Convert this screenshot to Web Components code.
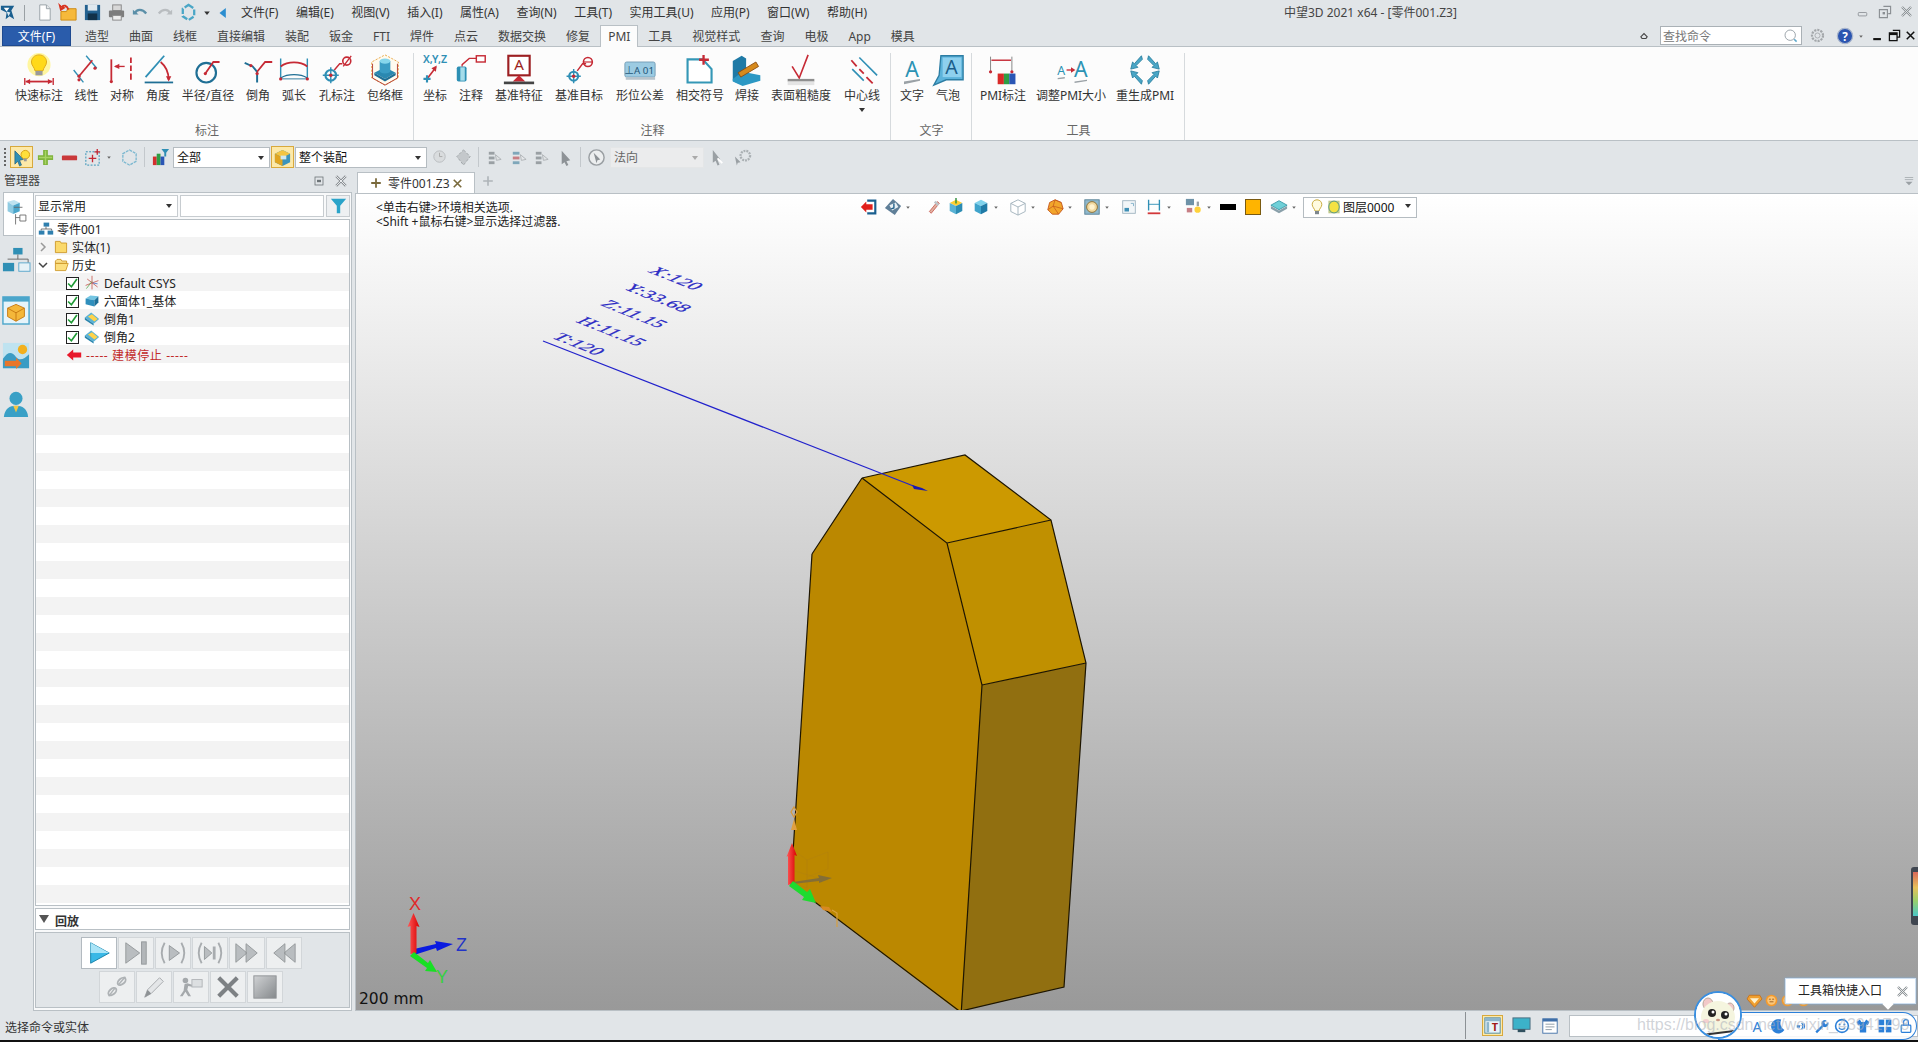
<!DOCTYPE html>
<html lang="zh">
<head>
<meta charset="utf-8">
<title>中望3D 2021 x64</title>
<style>
  html,body{margin:0;height:100%;overflow:hidden;}
  body{font:12px "Noto Sans","Noto Sans CJK SC",sans-serif;color:#333;background:#e1e5e8;position:relative;}
  #app{display:flex;flex-direction:column;height:1042px;}
  #work{display:flex;height:839px;}
  #foot{height:2px;background:#111;}
</style>
</head>
<body>
<div id="app">
  <zw-titlebar></zw-titlebar>
  <zw-tabs active="PMI"></zw-tabs>
  <zw-ribbon>
    <zw-group label="标注" width="414" pad="13">
      <zw-tool label="快速标注" w="52" icon="quick"></zw-tool>
      <zw-tool label="线性" w="43" icon="linear"></zw-tool>
      <zw-tool label="对称" w="28" icon="sym"></zw-tool>
      <zw-tool label="角度" w="44" icon="angle"></zw-tool>
      <zw-tool label="半径/直径" w="56" icon="radius"></zw-tool>
      <zw-tool label="倒角" w="44" icon="chamfer"></zw-tool>
      <zw-tool label="弧长" w="28" icon="arc"></zw-tool>
      <zw-tool label="孔标注" w="58" icon="hole"></zw-tool>
      <zw-tool label="包络框" w="38" icon="bbox"></zw-tool>
    </zw-group>
    <zw-group label="注释" width="477" pad="6">
      <zw-tool label="坐标" w="30" icon="coord"></zw-tool>
      <zw-tool label="注释" w="42" icon="note"></zw-tool>
      <zw-tool label="基准特征" w="54" icon="datumf"></zw-tool>
      <zw-tool label="基准目标" w="66" icon="datumt"></zw-tool>
      <zw-tool label="形位公差" w="56" icon="tol"></zw-tool>
      <zw-tool label="相交符号" w="64" icon="inter"></zw-tool>
      <zw-tool label="焊接" w="30" icon="weld"></zw-tool>
      <zw-tool label="表面粗糙度" w="78" icon="rough"></zw-tool>
      <zw-tool label="中心线" w="44" icon="center" more></zw-tool>
    </zw-group>
    <zw-group label="文字" width="81" pad="5">
      <zw-tool label="文字" w="32" icon="text"></zw-tool>
      <zw-tool label="气泡" w="40" icon="bubble"></zw-tool>
    </zw-group>
    <zw-group label="工具" width="213" pad="6">
      <zw-tool label="PMI标注" w="50" icon="pmi"></zw-tool>
      <zw-tool label="调整PMI大小" w="86" icon="resize"></zw-tool>
      <zw-tool label="重生成PMI" w="62" icon="regen"></zw-tool>
    </zw-group>
  </zw-ribbon>
  <zw-selectbar></zw-selectbar>
  <div id="work">
    <zw-manager>
      <zw-tree-row level="0" icon="asm" text="零件001"></zw-tree-row>
      <zw-tree-row level="1" chev="right" icon="folder" text="实体(1)"></zw-tree-row>
      <zw-tree-row level="1" chev="down" icon="folderopen" text="历史"></zw-tree-row>
      <zw-tree-row level="2" check icon="csys" text="Default CSYS"></zw-tree-row>
      <zw-tree-row level="2" check icon="block" text="六面体1_基体"></zw-tree-row>
      <zw-tree-row level="2" check icon="cham" text="倒角1"></zw-tree-row>
      <zw-tree-row level="2" check icon="cham" text="倒角2"></zw-tree-row>
      <zw-tree-row level="2" icon="stop" stop text="----- 建模停止 -----"></zw-tree-row>
    </zw-manager>
    <zw-viewport></zw-viewport>
  </div>
  <zw-statusbar></zw-statusbar>
  <div id="foot"></div>
</div>
<zw-toolbox></zw-toolbox>

<script>
const R = '#c62a35', B = '#2f8fb5', D = '#1f6f95';
const ln = (d, c, w) => `<path d="${d}" fill="none" stroke="${c}" stroke-width="${w || 1.5}"/>`;
const dot = (x, y, c, r) => `<circle cx="${x}" cy="${y}" r="${r || 1.8}" fill="${c || R}"/>`;
const target = (x, y, r) => `<circle cx="${x}" cy="${y}" r="${r}" fill="none" stroke="${B}" stroke-width="2.4"/><path d="M${x - r - 3} ${y}h${2 * r + 6}M${x} ${y - r - 3}v${2 * r + 6}" stroke="${B}" stroke-width="1.6"/>${dot(x, y, R, 2)}`;

// 36x36 ribbon icons
const RIBBON = {
  quick: `<circle cx="18" cy="12" r="13" fill="#fff6a0"/><path d="M18 1c-6 0-8.500 4.500-8.500 8 0 4 3.500 6 4 10h9c.5-4 4-6 4-10 0-3.500-2.500-8-8.500-8z" fill="#ffd91a" stroke="#dca512"/><rect x="14" y="19" width="8" height="5" fill="#9a9a9a"/>${ln('M3 31h30', R, 2)}${ln('M2 27v8M34 27v8', R, 1.5)}<path d="M3 31l5-3v6zM33 31l-5-3v6z" fill="${R}"/>`,
  linear: `${ln('M3 18l11 14', B)}${ln('M17 2l12 14', B)}${ln('M9 25L24 7', R, 2)}${dot(9, 29)}${dot(27, 16)}${dot(9, 25)}`,
  sym: `${ln('M6 6v24', R, 2)}${dot(6, 31)}${ln('M10 14h11', R, 1.5)}<path d="M9 14l6-3v6z" fill="${R}"/><path d="M28 4v6M28 13v6M28 22v7" stroke="${R}" stroke-width="2"/>`,
  angle: `${ln('M3 32h32', D, 2)}${ln('M4 26L25 2', B, 2)}${ln('M21 9c6 5 9 12 9 20', R, 2)}<path d="M30 31l-3-6h6z" fill="${R}"/>`,
  radius: `<circle cx="16" cy="21" r="11" fill="none" stroke="${D}" stroke-width="2.400"/>${ln('M15 22L24 9h7', R, 2)}${dot(15, 22)}`,
  chamfer: `${ln('M3 10l9 4 5 6v12', D, 2.200)}${ln('M17 20L26 9h8', R, 2)}${dot(10, 13)}${dot(17, 22)}`,
  arc: `${ln('M3 5v24M33 5v24', B, 1.600)}${ln('M3 28h30', D, 1)}${ln('M3 14c8-6 22-6 30 0', R, 2)}${ln('M3 27c8-5 22-5 30 0', D, 1.500)}${dot(3, 28)}${dot(33, 28)}`,
  hole: `${target(11, 24, 6)}${ln('M15 18l6-7h3', R, 1.600)}<circle cx="29" cy="8" r="4.500" fill="none" stroke="${R}" stroke-width="1.800"/>${ln('M25 14L34 2', R, 1.500)}`,
  bbox: `<path d="M18 1l15 8v18l-15 8-15-8V9z" fill="#fffbef" stroke="#e8a23c" stroke-dasharray="2.500 1.500"/><path d="M4 11v16l14 8 14-8V11" fill="none" stroke="#b5433a" stroke-width="1.100"/><path d="M6 21l12-6 12 6-12 7z" fill="#2a88b0"/><path d="M6 21v3l12 7 12-7v-3l-12 7z" fill="#1f6f95"/><path d="M12 8v11a6 3 0 0 0 12 0V8z" fill="#3a9cc4"/><ellipse cx="18" cy="8" rx="6" ry="3" fill="#86d6ec"/>`,
  coord: `<text x="18" y="10" font-size="12" text-anchor="middle" fill="${B}" font-weight="600">X,Y,Z</text>${ln('M9 28L19 15', R, 1.800)}<path d="M20 13l-1 7-5-4z" fill="${R}"/><path d="M5 28h8M9 24v8" stroke="${B}" stroke-width="2.400"/>`,
  note: `<rect x="2" y="14" width="11" height="17" rx="2" fill="#2c8fb4"/><rect x="6" y="15" width="5" height="15" fill="#a4dcea"/>${ln('M8 14v-2l8-7h8', R, 1.500)}<rect x="24" y="2" width="10" height="7" fill="#fff" stroke="${R}" stroke-width="1.600"/>`,
  datumf: `<rect x="6" y="2" width="24" height="22" fill="#fff" stroke="#9c1f22" stroke-width="2.400"/><text x="18" y="18" font-size="17" text-anchor="middle" fill="#9c1f22">A</text><path d="M18 24l7 7H11z" fill="#c62a35"/><rect x="1" y="31" width="34" height="3" fill="#444"/>`,
  datumt: `${target(12, 25, 5)}${ln('M16 19l6-8h4', R, 1.600)}<circle cx="28" cy="9" r="5" fill="none" stroke="${R}" stroke-width="1.800"/>${ln('M23 9h10', R, 1.300)}`,
  tol: `<rect x="1" y="9" width="34" height="17" rx="2" fill="#9ccbe2" stroke="#6f9ab3"/><text x="17" y="22" font-size="11" text-anchor="middle" fill="#23577a">⊥A 01</text><rect x="2" y="26" width="33" height="3" fill="#b8c4cc"/>`,
  inter: `<path d="M4 6h17l10 11v15H4z" fill="#fff" stroke="#3497b6" stroke-width="2.400"/>${ln('M22 1v11M17 6.500h11', R, 2.600)}`,
  weld: `<path d="M12 2l5 3v20l-10 8-5-3V8z" fill="#1f7aa6"/><path d="M2 28l11-8 20 4v6l-20 6-11-5z" fill="#2c98c4"/><path d="M8 21l20-12 3 5-20 12z" fill="#d68a1d" stroke="#8c4c10"/>`,
  rough: `${ln('M8 14l8 13L26 1', R, 1.800)}<rect x="3" y="28" width="30" height="3" fill="#8e8e8e"/><rect x="3" y="31" width="30" height="4" fill="#e4e4e4"/>`,
  center: `<path d="M6 7l6 7M15 17l5 5M23 26l7 7" stroke="${R}" stroke-width="2"/>${ln('M7 17l13 13', B, 1.800)}${ln('M15 4l20 20', B, 1.800)}`,
  text: `<text x="18" y="26" font-size="24" text-anchor="middle" fill="#2b93b4">A</text><path d="M9 31l18-3v2L9 34z" fill="#9aa1a6"/>`,
  bubble: `<path d="M10 2h25v27H16L2 35l6-11z" fill="#5cb3db" stroke="#2c7da3" stroke-width="1.500"/><rect x="12" y="4" width="21" height="22" fill="#8ed0ee"/><text x="22" y="23" font-size="22" text-anchor="middle" fill="#1d5e8a">A</text>`,
  pmi: `${ln('M4 3v18M28 3v18', '#7a7a7a', 1)}${ln('M5 7h22', R, 1.600)}${dot(4, 20)}${dot(28, 20)}<rect x="12" y="22" width="7" height="12" fill="#d92a28"/><rect x="19" y="22" width="6" height="12" fill="#2f9e44"/><rect x="25" y="22" width="7" height="12" fill="#2a56b5"/>`,
  resize: `<text x="7" y="24" font-size="14" text-anchor="middle" fill="#2b93b4">A</text>${ln('M13 18h7', R, 1.500)}<path d="M23 18l-5-3v6z" fill="${R}"/><text x="29" y="26" font-size="24" text-anchor="middle" fill="#2b93b4">A</text><path d="M3 27l8-1v1.500l-8 1zM22 31l14-2v1.500l-14 2z" fill="#9aa1a6"/>`,
  regen: `<g fill="#4aa6c6" stroke="#2a7f9f"><path d="M14 2l1 4-7 7 2 2-8 2 2-8 2 2z"/><path d="M22 2l-1 4 7 7-2 2 8 2-2-8-2 2z"/><path d="M14 34l1-4-7-7 2-2-8-2 2 8 2-2z"/><path d="M22 34l-1-4 7-7-2-2 8-2-2 8-2-2z"/></g>`
};

// 20x20 small icons
const cube = (t, l, r) => `<path d="M10 2l7 3.500-7 3.500-7-3.500z" fill="${t}"/><path d="M3 5.500l7 3.500v9l-7-3.500z" fill="${l}"/><path d="M17 5.500l-7 3.500v9l7-3.500z" fill="${r}"/>`;
const SMALL = {
  logo: `<path d="M2 3h14l-3 5 3 9-5-3-4 3 1-7-6-3z" fill="#1a5f8f"/><path d="M5 5h6l-3 4z" fill="#fff"/><path d="M8 9l4 1-2 4z" fill="#d9e8f0"/>`,
  newdoc: `<path d="M5 2h7l4 4v12H5z" fill="#fff" stroke="#9aa2a8"/><path d="M12 2v4h4" fill="#e4e8ea" stroke="#9aa2a8"/>`,
  open: `<path d="M2 9h6l1-3h9v12H2z" fill="#f6b93b" stroke="#cf8a12"/><path d="M10 7C8 2 5 2 3 4l2 1-3 2-1-4 1 1" fill="none" stroke="#d8331f" stroke-width="2"/>`,
  save: `<rect x="2" y="2" width="16" height="16" fill="#23618f"/><rect x="5" y="2" width="10" height="6" fill="#dfe8ee"/><rect x="5" y="11" width="10" height="7" fill="#11324a"/>`,
  print: `<rect x="6" y="2" width="9" height="6" fill="#d8d8d8" stroke="#888"/><rect x="2" y="8" width="16" height="7" rx="1" fill="#7d7d7d"/><rect x="6" y="13" width="9" height="5" fill="#eee" stroke="#888"/>`,
  undo: `<path d="M4 11c2-5 8-5 12 0" fill="none" stroke="#5b8fa8" stroke-width="2.400"/><path d="M2 7l6 5H2z" fill="#5b8fa8"/>`,
  redo: `<path d="M16 11c-2-5-8-5-12 0" fill="none" stroke="#b9bdc0" stroke-width="2.400"/><path d="M18 7l-6 5h6z" fill="#b9bdc0"/>`,
  refresh: `<path d="M10 2l6 4v8l-6 4-6-4V6z" fill="none" stroke="#4aa6c6" stroke-width="2.400" stroke-dasharray="6 2"/>`,
  ddown: `<path d="M6 8h8l-4 5z" fill="#333"/>`,
  ddgray: `<path d="M7 9h6l-3 4z" fill="#666"/>`,
  back: `<path d="M14 3v14L5 10z" fill="#2b8ed0"/>`,
  minwin: `<rect x="5" y="10" width="10" height="4" rx="1" fill="none" stroke="#8a8f93"/>`,
  maxwin: `<path d="M8 3h9v9h-3M3 7h10v10H3z" fill="none" stroke="#8a8f93" stroke-width="1.400"/><rect x="7" y="10" width="3" height="3" fill="#8a8f93"/>`,
  closewin: `<path d="M4 4l12 12M16 4L4 16" stroke="#8a8f93" stroke-width="3"/><path d="M4 4l12 12M16 4L4 16" stroke="#e1e5e8" stroke-width="1.200"/>`,
  up: `<path d="M6 11l4-4 4 4-1.500 2h-5z" fill="none" stroke="#444" stroke-width="1.300"/>`,
  search: `<circle cx="9" cy="9" r="6.500" fill="none" stroke="#9aa2a8" stroke-width="1.200"/><path d="M14 14l3 3" stroke="#5aa7cc" stroke-width="2"/>`,
  gear: `<circle cx="10" cy="10" r="6.500" fill="none" stroke="#a3a7aa" stroke-width="2.600" stroke-dasharray="2.500 1.200"/><circle cx="10" cy="10" r="3" fill="none" stroke="#a3a7aa"/>`,
  help: `<circle cx="10" cy="10" r="8.500" fill="#2b55b0" stroke="#a9b6cc" stroke-width="1.400"/><text x="10" y="15" font-size="13" font-weight="700" text-anchor="middle" fill="#fff">?</text>`,
  min2: `<rect x="5" y="13" width="9" height="2.500" fill="#111"/>`,
  max2: `<path d="M8 4h8v8h-3M4 7h9v9H4z" fill="none" stroke="#111" stroke-width="1.500"/><rect x="4" y="7" width="9" height="2.500" fill="#111"/>`,
  close2: `<path d="M5 5l10 10M15 5L5 15" stroke="#111" stroke-width="2"/>`,
  pick: `<path d="M3 3l9 9-4 1 2 5-2 1-2-5-3 3z" fill="#2f8fb5" stroke="#16506e" stroke-width=".6"/><circle cx="14" cy="7" r="4.500" fill="#ffdf3b" stroke="#d8a010"/><rect x="12.500" y="11" width="3" height="3" fill="#999"/>`,
  plus: `<path d="M10 2v16M2 10h16" stroke="#7fb33c" stroke-width="5"/><path d="M10 3v14M3 10h14" stroke="#a8d464" stroke-width="1.500"/>`,
  minus: `<rect x="2" y="8" width="16" height="5" rx="1" fill="#c9383a"/>`,
  addbox: `<rect x="3" y="4" width="14" height="14" fill="none" stroke="#2f8fb5" stroke-dasharray="2 1.500"/><path d="M10 7v8M6 11h8" stroke="${R}" stroke-width="1.400"/><path d="M15 1v6M12 4h6" stroke="${R}" stroke-width="1.400"/>`,
  hexa: `<path d="M10 2l7 4v8l-7 4-7-4V6z" fill="none" stroke="#7cb8d0" stroke-width="1.400" stroke-dasharray="3 1"/>`,
  filterc: `<rect x="2" y="9" width="4" height="9" fill="#d32f2f"/><rect x="6" y="6" width="4" height="12" fill="#2e9e44"/><rect x="10" y="9" width="4" height="9" fill="#2a56b5"/><path d="M11 1h8l-3 4v4h-2V5z" fill="#2f8fb5"/>`,
  asmb: `<path d="M10 2l8 4v9l-8 4-8-4V6z" fill="#3b94bc"/><path d="M10 2l8 4-8 4-8-4z" fill="#f4c542"/><path d="M2 6l8 4v9l-8-4z" fill="#e0a520"/><rect x="8" y="8" width="6" height="4" fill="#cfe8f2"/>`,
  dim1: `<circle cx="10" cy="9" r="6" fill="#d9dcde" stroke="#b9bdc0"/><path d="M10 5v4h3" stroke="#aaa" fill="none"/>`,
  dim2: `<path d="M10 2l7 7-7 9-7-9z" fill="#c4c8cb" stroke="#9fa4a8" stroke-dasharray="3 1.500"/>`,
  dim3: `<rect x="4" y="4" width="6" height="3" fill="#9aa0a4"/><rect x="4" y="9" width="6" height="3" fill="#9aa0a4"/><rect x="4" y="14" width="6" height="3" fill="#9aa0a4"/><path d="M11 7l6 5-5 1z" fill="#dfe2e4" stroke="#b0b4b7"/>`,
  dim4: `<rect x="4" y="4" width="7" height="3" fill="#7fa7ba"/><rect x="4" y="9" width="7" height="3" fill="#c77f85"/><rect x="4" y="14" width="7" height="3" fill="#7fa7ba"/><path d="M12 7l6 5-5 1z" fill="#e6e8ea" stroke="#b0b4b7"/>`,
  dim5: `<path d="M6 3l9 10-4 1 2 4-2 1-2-4-3 2z" fill="#8d9296"/>`,
  dim6: `<circle cx="10" cy="10" r="8" fill="#eceeef" stroke="#9a9fa3" stroke-width="1.500"/><path d="M7 5l7 7-3 1-1 3z" fill="#8d9296"/>`,
  dim7: `<path d="M4 2l8 10-3 .5 2 5-2 1-2-5-3 2z" fill="#9aa0a4"/><path d="M9 11l5 5" stroke="#fff" stroke-width="2"/>`,
  dim8: `<path d="M2 9l6 6-3 .5-1 3z" fill="#9aa0a4"/><circle cx="13" cy="8" r="5" fill="none" stroke="#aab0b3" stroke-width="2.400" stroke-dasharray="2 1"/>`,
  mgrpin: `<rect x="5" y="5" width="10" height="10" fill="none" stroke="#6d7478"/><rect x="7.500" y="8.500" width="5" height="3" fill="#6d7478"/>`,
  mgrx: `<path d="M4 4l12 12M16 4L4 16" stroke="#8a8f93" stroke-width="3"/><path d="M4 4l12 12M16 4L4 16" stroke="#eef0f2" stroke-width="1.200"/>`,
  funnel: `<path d="M1 1h18l-7 8v9H8V9z" fill="#2aa3c9"/>`,
  tabplus: `<path d="M10 4v12M4 10h12" stroke="#7a6a3c" stroke-width="2.200"/>`,
  tabplus2: `<path d="M10 4v12M4 10h12" stroke="#aeb4b8" stroke-width="2"/>`,
  tabx: `<path d="M5 5l10 10M15 5L5 15" stroke="#7a6a3c" stroke-width="2.200"/>`,
  morev: `<path d="M4 5h12M4 8h12" stroke="#9aa0a4"/><path d="M5 11h10l-5 5z" fill="#9aa0a4"/>`,
  // view toolbar
  exit: `<path d="M8 3h9v14H8" fill="none" stroke="#1a5f8f" stroke-width="2.400"/><path d="M1 10l6-6v3h7v6H7v3z" fill="#e1201c"/>`,
  v1: `<path d="M10 1l9 8-7 10L1 11z" fill="#5f7f98"/><path d="M6 8l7-3 3 5-7 4z" fill="#e8f0f4"/><path d="M11 6v5l-3 1" fill="none" stroke="#1f5f8a" stroke-width="1.500"/>`,
  v2: `<path d="M6 15L15 4l2 2-9 11z" fill="#e0b0a0" stroke="#c2453c" stroke-width=".8"/><path d="M13 3l4 4-2 2-4-4z" fill="#bdc4c8"/>`,
  v3: cube('#ffcf33', '#59b2d4', '#2c8cb3') + `<path d="M10 0v6" stroke="#2f8f3d" stroke-width="1.600"/>`,
  v4: cube('#7fd2ec', '#3fa3cb', '#1f7aa6'),
  v5: `<path d="M10 2l8 4v9l-8 4-8-4V6z" fill="#fff" stroke="#9fb0ba"/><path d="M2 6l8 4 8-4M10 10v9" fill="none" stroke="#9fb0ba"/>`,
  v6: `<path d="M10 2l7 3 2 7-5 6H7l-5-5 2-8z" fill="#f2a52b" stroke="#c4561c"/><path d="M10 2l-2 7 6 9M8 9l-6 4M8 9l11 3M10 2l7 3" fill="none" stroke="#c4561c" stroke-width=".8"/>`,
  v7: `<rect x="2" y="2" width="16" height="16" fill="#8fb8cc" stroke="#557f95"/><circle cx="10" cy="10" r="6" fill="#f0d9a0" stroke="#8a6a2a"/><circle cx="10" cy="10" r="3" fill="#fff3cf"/>`,
  v8: `<rect x="3" y="3" width="14" height="14" fill="#f2f6f8" stroke="#9fb4c0"/><rect x="5" y="11" width="5" height="4" fill="#3f8fb5"/><path d="M12 6h3v3" fill="none" stroke="#7fb0c8"/>`,
  v9: `<path d="M4 2v12M16 2v12" stroke="#2f8fb5" stroke-width="1.500"/><path d="M4 7h12" stroke="#2f8fb5"/><path d="M3 17h14" stroke="#d2383a" stroke-width="2"/>`,
  v10: `<rect x="1" y="1" width="9" height="7" fill="#6f93a8"/><rect x="2" y="11" width="6" height="5" fill="#c77f85"/><circle cx="14" cy="13" r="3.500" fill="#ffd23b"/><rect x="13" y="4" width="2.500" height="5" fill="#9aa0a4"/>`,
  v11: `<path d="M10 3l9 5-9 5-9-5z" fill="#6fd0d8" stroke="#3a9aa8"/><path d="M1 9l9 5 9-5v3l-9 5-9-5z" fill="#8aa0aa"/>`,
  bulb: `<path d="M10 1c-4 0-6 3-6 6 0 3 3 5 3.500 8h5c.5-3 3.500-5 3.500-8 0-3-2-6-6-6z" fill="#fffbe0" stroke="#c8a93a" stroke-width="1.200"/><rect x="7.500" y="15" width="5" height="4" fill="#7d868c"/>`,
  lamp: `<rect x="2" y="1" width="16" height="18" fill="#bfc88a"/><ellipse cx="10" cy="10" rx="7.500" ry="8.500" fill="#f4e243" stroke="#3f8a8a" stroke-width="1.200"/>`,
  // manager rail
  rail1: `<path d="M6 3l7-2 6 3-7 3z" fill="#bfe3f0"/><path d="M6 3l6 4v9l-6-3z" fill="#8fcbe2"/><path d="M19 4l-7 3v9l7-3z" fill="#4ba6cb"/><path d="M16 14h10M18 22v12M18 26h5M23 23h7v7h-7z" transform="translate(-2 -4) scale(.92)" fill="none" stroke="#666"/>`,
  rail2: `<rect x="12" y="1" width="10" height="7" fill="#2f8fb5"/><path d="M17 8v5M6 13h22v4" fill="none" stroke="#666"/><rect x="1" y="17" width="12" height="9" fill="#2f8fb5"/><rect x="18" y="17" width="12" height="9" fill="#e6f2f7" stroke="#5aa7cc"/>`,
  rail3: `<rect x="1" y="1" width="28" height="29" fill="#e6f4fa" stroke="#4ba6cb" stroke-width="1.500"/><rect x="1" y="1" width="28" height="5" fill="#4ba6cb"/><path d="M15 9l9 4v9l-9 5-9-5v-9z" fill="#f4b73a" stroke="#c77a12"/><path d="M6 13l9 5 9-5M15 18v9" fill="none" stroke="#c77a12"/>`,
  rail4: `<rect x="1" y="1" width="28" height="27" fill="#bfe3f0"/><circle cx="22" cy="8" r="5" fill="#f2b01e"/><path d="M1 18c6-9 10-7 14-2s9 2 14-3v15H1z" fill="#3a9cc4"/><path d="M3 20h12v-3l6 6-6 6v-3H3z" fill="#e8762a"/>`,
  rail5: `<circle cx="15" cy="9" r="7" fill="#39a0c6"/><path d="M2 29c1-9 6-12 13-12s12 3 13 12z" fill="#39a0c6"/><path d="M12 17l3 7 3-7z" fill="#f4c542"/>`,
  // tree
  asm: `<rect x="7" y="2" width="7" height="5" fill="#2f7fae"/><path d="M10 7v3M4 10h13v2" fill="none" stroke="#555"/><path d="M4 10v2" stroke="#555"/><rect x="1" y="12" width="7" height="5" fill="#2f7fae"/><rect x="12" y="12" width="7" height="5" fill="#2f7fae"/>`,
  folder: `<path d="M3 3h6l1 2h7v12H3z" fill="#fbd96b" stroke="#c88f1a"/>`,
  folderopen: `<path d="M3 5l2-2h5l1 2h6v3H3z" fill="#fbe08a" stroke="#c88f1a"/><path d="M3 8h16l-3 9H3z" fill="#fcdf7e" stroke="#c88f1a"/>`,
  csys: `<path d="M10 1v17M2 13l16-6M4 5l13 10" fill="none" stroke="#c4534a"/><path d="M10 8l-7 9" stroke="#56a64e"/><path d="M11 10l6 1" stroke="#4a6fc4"/>`,
  block: `<path d="M2 7l6-4 10 1-5 5z" fill="#74c5e2"/><path d="M2 7l11 2v8L2 14z" fill="#2f8fbd"/><path d="M13 9l5-5v8l-5 5z" fill="#1d6f98"/>`,
  cham: `<path d="M1 8l8-6 10 8-7 6z" fill="#5bb3d6"/><path d="M5 7l5-3 7 6-4 3z" fill="#ffd34a"/><path d="M1 8l11 8v2L1 11z" fill="#2a85ad"/>`,
  stop: `<path d="M1 10l8-7v4h10v6H9v4z" fill="#e8182b"/>`,
  // status bar
  st1: `<rect x="1" y="1" width="18" height="18" fill="#e8f3f8" stroke="#3e7d9c"/><rect x="1" y="1" width="18" height="4" fill="#8db6cc"/><rect x="3" y="6" width="3" height="12" fill="#8db6cc"/><text x="13" y="17" font-size="13" font-weight="700" text-anchor="middle" fill="#a01a1a">T</text>`,
  st2: `<rect x="1" y="2" width="18" height="12" fill="#3cb2c9" stroke="#4c6d80"/><rect x="6" y="14" width="8" height="3" fill="#30505f"/>`,
  st3: `<rect x="2" y="2" width="16" height="16" fill="#fff" stroke="#3f6fa8"/><rect x="2" y="2" width="16" height="3" fill="#3f6fa8"/><path d="M5 8h10M5 11h10M5 14h7" stroke="#8a97a3"/>`,
  // playback
  play: `<path d="M5 3l20 11-20 11z" fill="#3ab8e6" stroke="#157fa8"/><path d="M5 3l20 11H5z" fill="#a9e4f7"/>`,
  pl1: `<path d="M3 3l15 11-15 11z" fill="#b9bdc0" stroke="#94989b"/><rect x="20" y="2" width="5" height="24" fill="#b2b6b9" stroke="#94989b"/>`,
  pl2: `<path d="M10 6l11 8-11 8z" fill="#b9bdc0" stroke="#94989b"/><path d="M5 3c-4 7-4 15 0 22M23 3c4 7 4 15 0 22" fill="none" stroke="#a8acaf" stroke-width="2"/>`,
  pl3: `<path d="M8 7l8 7-8 7z" fill="#b9bdc0" stroke="#94989b"/><rect x="17" y="7" width="3" height="14" fill="#a8acaf"/><path d="M5 3c-4 7-4 15 0 22M23 3c4 7 4 15 0 22" fill="none" stroke="#a8acaf" stroke-width="2"/>`,
  pl4: `<path d="M2 4l12 10-12 10zM13 4l12 10-12 10z" fill="#b9bdc0" stroke="#94989b"/>`,
  pl5: `<path d="M26 4L14 14l12 10zM15 4L3 14l12 10z" fill="#b9bdc0" stroke="#94989b"/>`,
  pl6: `<path d="M5 24l7-9M16 11l7-8" stroke="#aeb2b5" stroke-width="1.500"/><ellipse cx="19" cy="8" rx="5" ry="3" fill="none" stroke="#aeb2b5" stroke-width="2" transform="rotate(-40 19 8)"/><ellipse cx="9" cy="19" rx="5" ry="3" fill="none" stroke="#aeb2b5" stroke-width="2" transform="rotate(-40 9 19)"/>`,
  pl7: `<path d="M4 25l3-8L20 4l4 4-13 13z" fill="#e4e6e8" stroke="#a4a8ab"/><path d="M4 25l3-8 4 4z" fill="#8e9295"/>`,
  pl8: `<circle cx="8" cy="7" r="3" fill="#a4a8ab"/><path d="M7 11l-1 7-4 6h3l3-5 3 5h3l-4-7 1-4 6 1v-2l-7-2z" fill="#a4a8ab"/><rect x="15" y="6" width="11" height="8" fill="#dcdfe1" stroke="#b0b4b7"/>`,
  pl9: `<path d="M4 4l20 20M24 4L4 24" stroke="#7d8184" stroke-width="4.500"/>`,
  pl10: `<rect x="2" y="2" width="24" height="24" fill="url(#zwg)" stroke="#8e9295"/><defs><linearGradient id="zwg" x1="0" y1="0" x2="1" y2="1"><stop offset="0" stop-color="#d0d2d4"/><stop offset="1" stop-color="#85898c"/></linearGradient></defs>`,
  // toolbox
  tA: `<text x="10" y="17" font-size="18" text-anchor="middle" fill="#2b7fd8">A</text>`,
  tmoon: `<path d="M14 2a9 9 0 1 0 4 13A10 10 0 0 1 14 2z" fill="#2b7fd8"/>`,
  tdots: `<path d="M6 9h4v3H6z" fill="#2b7fd8"/><path d="M12 6c2 2 2 6 0 8M15 7c1 2 1 4 0 6" fill="none" stroke="#2b7fd8" stroke-width="1.400"/>`,
  twrench: `<path d="M3 17l8-8a4.500 4.500 0 0 1 6-6l-3 3 2 2 3-3a4.500 4.500 0 0 1-6 6l-8 8z" fill="#2b7fd8"/>`,
  tsmile: `<circle cx="10" cy="10" r="8" fill="none" stroke="#2b7fd8" stroke-width="2"/><circle cx="7" cy="8" r="1.200" fill="#2b7fd8"/><circle cx="13" cy="8" r="1.200" fill="#2b7fd8"/><path d="M6 12c2 3 6 3 8 0" fill="none" stroke="#2b7fd8" stroke-width="1.500"/>`,
  tshirt: `<path d="M6 2l-4 3 2 4 2-1v10h8V8l2 1 2-4-4-3-2 3h-4z" fill="#2b7fd8"/>`,
  tgrid: `<rect x="2" y="2" width="7" height="7" fill="#2b7fd8"/><rect x="11" y="2" width="7" height="7" fill="#2b7fd8"/><rect x="2" y="11" width="7" height="7" fill="#2b7fd8"/><rect x="11" y="11" width="7" height="7" fill="#2b7fd8"/>`,
  tlock: `<rect x="4" y="9" width="12" height="9" rx="1" fill="none" stroke="#2b7fd8" stroke-width="1.500"/><path d="M7 9V5a3 3 0 0 1 6 0v4" fill="none" stroke="#2b7fd8" stroke-width="1.500"/>`,
  gem: `<path d="M3 3h14l3 5-10 11L0 8z" fill="#f0a030" stroke="#c46a10"/><path d="M4 7h12l-6 7z" fill="#fff3d0"/>`,
  face: `<circle cx="10" cy="10" r="9" fill="#f59a2c"/><circle cx="10" cy="10" r="6.500" fill="#fbc77a"/><path d="M6 8h3M11 8h3M7 12h6" stroke="#8a4a10" stroke-width="1.200"/>`
};

function svg(name, w, h) {
  const big = RIBBON[name];
  const box = /^rail/.test(name) ? 30 : /^(play|pl\d)/.test(name) ? 28 : big ? 36 : 20;
  return `<svg width="${w}" height="${h || w}" viewBox="0 0 ${box} ${box}" style="display:block;flex:none;overflow:visible">${big || SMALL[name] || ''}</svg>`;
}

class ZwTitlebar extends HTMLElement {
  constructor() {
    super();
    this.attachShadow({ mode: "open" });
    const quick = [['logo', 16], ['', 16], ['newdoc', 24], ['open', 24], ['save', 24], ['print', 24], ['undo', 24], ['redo', 24], ['refresh', 24], ['ddown', 14], ['back', 18]];
    const menu = ['文件(F)', '编辑(E)', '视图(V)', '插入(I)', '属性(A)', '查询(N)', '工具(T)', '实用工具(U)', '应用(P)', '窗口(W)', '帮助(H)'];
    /*html*/
    this.shadowRoot.innerHTML = `
      <style>
        :host{display:flex;align-items:center;height:25px;color:#333;}
        .q{display:flex;align-items:center;justify-content:center;height:25px;}
        .sep{width:1px;height:16px;background:#9aa0a4;}
        .menu{display:flex;gap:17.500px;width:1043px;margin-left:9px;line-height:25px;}
        .title{color:#444;line-height:25px;}
        .win{display:flex;margin-left:auto;gap:6px;padding-right:4px;}
      </style>
      ${quick.map(([n, w]) => `<span class="q" style="width:${w}px">${n ? svg(n, n === 'ddown' || n === 'back' ? 14 : 19) : '<span class="sep"></span>'}</span>`).join('')}
      <div class="menu">${menu.map(m => `<span>${m}</span>`).join('')}</div>
      <span class="title">中望3D 2021 x64 - [零件001.Z3]</span>
      <div class="win">${svg('minwin', 17)}${svg('maxwin', 16)}${svg('closewin', 15)}</div>`;
  }
}
customElements.define('zw-titlebar', ZwTitlebar);

class ZwTabs extends HTMLElement {
  constructor() {
    super();
    this.attachShadow({ mode: "open" });
    const tabs = ['造型', '曲面', '线框', '直接编辑', '装配', '钣金', 'FTI', '焊件', '点云', '数据交换', '修复', 'PMI', '工具', '视觉样式', '查询', '电极', 'App', '模具'];
    const active = this.getAttribute('active');
    /*html*/
    this.shadowRoot.innerHTML = `
      <style>
        :host{display:flex;align-items:stretch;height:22px;box-sizing:border-box;border-bottom:1px solid #b9c0c5;}
        .file{margin:1px 4px 0 2px;width:69px;box-sizing:border-box;background:#2a5cab;border:1px solid #1e4a90;color:#fff;text-align:center;line-height:20px;}
        .tab{padding:0 10px;line-height:23px;color:#444;}
        .tab.on{background:#fcfcfc;border:1px solid #b9c0c5;border-bottom:none;margin-bottom:-1px;padding:0 7px;line-height:22px;height:21px;}
        .right{display:flex;align-items:center;margin-left:auto;}
        .find{width:142px;height:19px;box-sizing:border-box;margin:0 7px 0 8px;background:#fff;border:1px solid #aab1b6;display:flex;align-items:center;justify-content:space-between;padding:0 2px;color:#777;}
      </style>
      <div class="file">文件(F)</div>
      ${tabs.map(t => `<div class="tab ${t === active ? 'on' : ''}">${t}</div>`).join('')}
      <div class="right">
        ${svg('up', 16)}
        <div class="find"><span>查找命令</span>${svg('search', 16)}</div>
        <span style="margin-right:10px">${svg('gear', 17)}</span>
        <span style="margin-right:1px">${svg('help', 18)}</span>
        ${svg('ddgray', 12)}
        <span style="margin-left:2px">${svg('min2', 17)}</span>
        ${svg('max2', 17)}
        ${svg('close2', 15)}
      </div>`;
  }
}
customElements.define('zw-tabs', ZwTabs);

class ZwRibbon extends HTMLElement {
  constructor() {
    super();
    this.attachShadow({ mode: "open" });
    /*html*/
    this.shadowRoot.innerHTML = `
      <style>
        :host{display:flex;height:94px;box-sizing:border-box;background:#fcfcfc;border-bottom:1px solid #b9c0c5;}
      </style>
      <slot></slot>`;
  }
}
customElements.define('zw-ribbon', ZwRibbon);

class ZwGroup extends HTMLElement {
  constructor() {
    super();
    this.attachShadow({ mode: "open" });
    /*html*/
    this.shadowRoot.innerHTML = `
      <style>
        :host{display:flex;flex-direction:column;height:93px;box-sizing:border-box;
          background:linear-gradient(#d6dadd,#d6dadd) right 6px/1px 100% no-repeat;}
        .row{display:flex;box-sizing:border-box;}
        .name{margin-top:auto;text-align:center;line-height:18px;color:#666;}
      </style>
      <div class="row" style="padding-left:${this.getAttribute('pad')}px"><slot></slot></div>
      <div class="name">${this.getAttribute('label')}</div>`;
    this.style.width = this.getAttribute('width') + 'px';
  }
}
customElements.define('zw-group', ZwGroup);

class ZwTool extends HTMLElement {
  constructor() {
    super();
    this.attachShadow({ mode: "open" });
    /*html*/
    this.shadowRoot.innerHTML = `
      <style>
        :host{display:flex;flex-direction:column;align-items:center;padding-top:3px;color:#333;white-space:nowrap;}
        .ic{height:36px;padding-top:4px;box-sizing:border-box;}
        .lb{margin-top:3px;line-height:14px;}
        .more{width:0;height:0;margin-top:5px;border:3px solid transparent;border-top:4px solid #333;}
      </style>
      <div class="ic">${svg(this.getAttribute('icon'), 32)}</div>
      <div class="lb">${this.getAttribute('label')}</div>
      ${this.hasAttribute('more') ? '<div class="more"></div>' : ''}`;
    this.style.width = this.getAttribute('w') + 'px';
  }
}
customElements.define('zw-tool', ZwTool);

class ZwSelectbar extends HTMLElement {
  constructor() {
    super();
    this.attachShadow({ mode: "open" });
    const s = (w, n, size) => `<span class="s" style="width:${w}px">${n ? svg(n, size || 19) : ''}</span>`;
    const combo = (w, text, cls) => `<span class="combo ${cls || ''}" style="width:${w}px"><span>${text}</span><i></i></span>`;
    /*html*/
    this.shadowRoot.innerHTML = `
      <style>
        :host{display:flex;align-items:center;height:31px;box-sizing:border-box;padding-top:1px;color:#111;}
        .s{display:flex;align-items:center;justify-content:center;height:22px;flex:none;}
        .grip{width:2px;height:18px;margin:0 4px;background:repeating-linear-gradient(#666 0 2px,transparent 2px 4px);flex:none;}
        .on{box-sizing:border-box;background:#fde9a8;border:1px solid #d8a93c;}
        .sep{width:1px;height:20px;background:#c3c8cc;flex:none;}
        .combo{display:flex;align-items:center;justify-content:space-between;height:21px;box-sizing:border-box;padding:0 5px 0 3px;background:#fff;border:1px solid #b5bcc1;flex:none;}
        .combo i{width:0;height:0;border:3.500px solid transparent;border-top:4px solid #333;margin-top:4px;}
        .combo.off{background:#ebeced;color:#666;border-color:#e4e6e7;}
        .combo.off i{border-top-color:#aaa;}
      </style>
      <span class="grip"></span>
      <span class="s on" style="width:23px">${svg('pick', 19)}</span>
      ${s(24, 'plus')}${s(24, 'minus')}${s(22, 'addbox')}${s(12, 'ddgray', 12)}<span style="width:2px"></span>
      ${s(24, 'hexa')}<span style="width:3px"></span><span class="sep"></span><span style="width:3px"></span>
      ${s(24, 'filterc')}<span style="width:1px"></span>
      ${combo(97, '全部')}<span style="width:1px"></span>
      <span class="s on" style="width:23px">${svg('asmb', 19)}</span><span style="width:1px"></span>
      ${combo(132, '整个装配')}
      ${s(24, 'dim1')}${s(24, 'dim2')}
      <span style="width:3px"></span><span class="sep"></span><span style="width:3px"></span>
      ${s(24, 'dim3')}${s(24, 'dim4')}${s(23, 'dim3')}${s(24, 'dim5')}
      <span style="width:3px"></span><span class="sep"></span><span style="width:3px"></span>
      ${s(24, 'dim6')}<span style="width:2px"></span>
      ${combo(94, '法向', 'off')}<span style="width:2px"></span>
      ${s(24, 'dim7')}${s(24, 'dim8')}`;
  }
}
customElements.define('zw-selectbar', ZwSelectbar);

class ZwManager extends HTMLElement {
  constructor() {
    super();
    this.attachShadow({ mode: "open" });
    const rail = ['rail1', 'rail2', 'rail3', 'rail4', 'rail5'];
    const gaps = [0, 20, 21, 18, 20];
    /*html*/
    this.shadowRoot.innerHTML = `
      <style>
        :host{display:flex;flex-direction:column;width:355px;flex:none;box-sizing:border-box;}
        .head{display:flex;align-items:center;height:20px;padding:0 5px 2px 4px;box-sizing:border-box;color:#444;line-height:18px;}
        .head .b{margin-left:auto;display:flex;gap:6px;margin-right:1px;}
        .body{display:flex;flex:1;min-height:0;height:0;}
        .rail{width:33px;flex:none;display:flex;flex-direction:column;align-items:center;padding:7px 2px 0 0;box-sizing:border-box;position:relative;}
        .rail .first{position:absolute;left:3px;top:0;width:30px;height:44px;background:#fff;border:1px solid #b9c0c5;border-right:none;box-sizing:border-box;z-index:0;}
        .rail span{position:relative;z-index:1;}
        .panel{width:319px;flex:none;box-sizing:border-box;border:1px solid #b9c0c5;background:#f8f9fa;padding:2px 1px 2px 1px;display:flex;flex-direction:column;gap:2px;}
        .filter{display:flex;gap:2px;height:22px;flex:none;}
        .pick{width:143px;box-sizing:border-box;background:#fff;border:1px solid #c7ccd0;display:flex;align-items:center;justify-content:space-between;padding:0 5px 0 2px;color:#222;}
        .pick i{width:0;height:0;border:3.500px solid transparent;border-top:4px solid #333;margin-top:3px;}
        .txt{width:144px;background:#fff;border:1px solid #c7ccd0;box-sizing:border-box;}
        .fn{flex:1;background:#eef0f2;border:1px solid #c7ccd0;display:flex;align-items:center;justify-content:center;box-sizing:border-box;}
        .tree{flex:1;min-height:0;box-sizing:border-box;border:1px solid #b9c0c5;background:repeating-linear-gradient(#fff 0 18px,#f3f3f3 18px 36px) 0 -1px;overflow:hidden;}
        .play-head{height:22px;flex:none;box-sizing:border-box;border:1px solid #b9c0c5;background:#fff;display:flex;align-items:center;gap:6px;padding:3px 0 0 3px;font-weight:700;color:#333;}
        .play-head i{width:0;height:0;border:5px solid transparent;border-top:8px solid #555;border-bottom:none;margin-top:-3px;}
      </style>
      <div class="head"><span>管理器</span><span class="b">${svg('mgrpin', 16)}${svg('mgrx', 16)}</span></div>
      <div class="body">
        <div class="rail">
          <div class="first"></div>
          ${rail.map((n, i) => `<span style="margin-top:${gaps[i]}px">${svg(n, 28)}</span>`).join('')}
        </div>
        <div class="panel">
          <div class="filter">
            <div class="pick"><span>显示常用</span><i></i></div>
            <div class="txt"></div>
            <div class="fn">${svg('funnel', 17)}</div>
          </div>
          <div class="tree"><slot></slot></div>
          <div class="play-head"><i></i><span>回放</span></div>
          <zw-playback></zw-playback>
        </div>
      </div>`;
  }
}
customElements.define('zw-manager', ZwManager);

class ZwTreeRow extends HTMLElement {
  constructor() {
    super();
    this.attachShadow({ mode: "open" });
    const level = Number(this.getAttribute('level'));
    const chev = this.getAttribute('chev');
    const stop = this.hasAttribute('stop');
    let lead = '';
    if (chev) {
      const d = chev === 'right' ? 'M3 1l4 4-4 4' : 'M1 3l4 4 4-4';
      lead = `<svg width="10" height="10" viewBox="0 0 10 10" style="margin:0 5px 0 0"><path d="${d}" fill="none" stroke="${chev === 'right' ? '#999' : '#444'}" stroke-width="1.500"/></svg>`;
    }
    const pad = level === 0 ? 2 : level === 1 ? 2 : 30;
    /*html*/
    this.shadowRoot.innerHTML = `
      <style>
        :host{display:flex;align-items:center;height:18px;white-space:nowrap;color:#222;box-sizing:border-box;padding-left:${pad}px;}
        .cb{width:13px;height:13px;box-sizing:border-box;border:1px solid #222;background:#fff;margin-right:5px;flex:none;display:flex;}
        .t{margin-left:${level === 2 ? 4 : 3}px;color:${stop ? '#c22a2a' : '#222'};${stop ? 'letter-spacing:.6px;' : ''}}
      </style>
      ${lead}
      ${this.hasAttribute('check') ? `<span class="cb"><svg width="11" height="11" viewBox="0 0 10 10"><path d="M1 5l3 3 5-7" fill="none" stroke="#1f9a35" stroke-width="1.500"/></svg></span>` : ''}
      ${svg(this.getAttribute('icon'), 16)}
      <span class="t">${this.getAttribute('text')}</span>`;
  }
}
customElements.define('zw-tree-row', ZwTreeRow);

class ZwPlayback extends HTMLElement {
  constructor() {
    super();
    this.attachShadow({ mode: "open" });
    const btn = (n, on) => `<span class="b ${on ? 'on' : ''}">${svg(n, 26)}</span>`;
    /*html*/
    this.shadowRoot.innerHTML = `
      <style>
        :host{display:flex;flex-direction:column;align-items:center;gap:2px;height:76px;flex:none;box-sizing:border-box;border:1px solid #b9c0c5;background:#e1e5e8;padding:4px 3px 0 0;}
        .r{display:flex;gap:1px;}
        .b{width:36px;height:32px;box-sizing:border-box;border:1px solid #d2d6d9;background:#edeff0;display:flex;align-items:center;justify-content:center;}
        .b.on{background:#fff;border-color:#b3bac0;}
      </style>
      <div class="r">${btn('play', 1)}${btn('pl1')}${btn('pl2')}${btn('pl3')}${btn('pl4')}${btn('pl5')}</div>
      <div class="r">${btn('pl6')}${btn('pl7')}${btn('pl8')}${btn('pl9')}${btn('pl10')}</div>`;
  }
}
customElements.define('zw-playback', ZwPlayback);

class ZwViewport extends HTMLElement {
  constructor() {
    super();
    this.attachShadow({ mode: "open" });
    const v = (n, w, dd) => `<span class="v" style="width:${w}px">${svg(n, 18)}${dd ? svg('ddgray', 12) : ''}</span>`;
    const pmi = [['X:120', 648, 271], ['Y:33.68', 624, 288], ['Z:11.15', 600, 304], ['H:11.15', 576, 321], ['T:120', 552, 337]];
    /*html*/
    this.shadowRoot.innerHTML = `
      <style>
        :host{display:flex;flex-direction:column;flex:1;min-width:0;}
        .tabs{display:flex;align-items:stretch;height:21px;flex:none;padding-left:2px;box-sizing:border-box;}
        .doc{display:flex;align-items:center;width:118px;box-sizing:border-box;background:#fff;border:1px solid #b9c0c5;border-bottom:none;padding-left:10px;color:#333;}
        .doc span{margin:0 0 0 4px;}
        .add{margin:1px 0 0 5px;}
        .more{margin-left:auto;margin-right:2px;margin-top:2px;}
        .cv{flex:1;position:relative;overflow:hidden;border:1px solid #b9c0c5;border-right:none;background:linear-gradient(#fff,#999);height:0;}
        .cv svg.scene{position:absolute;left:0;top:0;}
        .hint{position:absolute;left:20px;top:7px;line-height:14px;color:#222;}
        .vbar{position:absolute;left:504px;top:2px;display:flex;align-items:center;height:22px;}
        .v{display:flex;align-items:center;justify-content:flex-start;flex:none;}
        .layer{display:flex;align-items:center;width:114px;height:21px;box-sizing:border-box;background:#fff;border:1px solid #b5bcc1;padding:0 5px;gap:2px;margin-left:1px;color:#111;flex:none;}
        .layer i{margin-left:auto;width:0;height:0;border:3px solid transparent;border-top:4px solid #333;}
        .scale{position:absolute;right:0;top:673px;width:7px;height:58px;background:#3f4650;border-radius:3px 0 0 3px;padding:5px 0 0 2px;box-sizing:border-box;}
        .scale div{height:44px;background:linear-gradient(#d8685a,#e8c05a 35%,#9ad06a 65%,#4ac8c8);}
        .mm{position:absolute;left:3px;bottom:0;font:15.500px/22px "DejaVu Sans",sans-serif;color:#111;}
      </style>
      <div class="tabs">
        <div class="doc">${svg('tabplus', 16)}<span>零件001.Z3</span>${svg('tabx', 15)}</div>
        <div class="add">${svg('tabplus2', 16)}</div>
        <div class="more">${svg('morev', 14)}</div>
      </div>
      <div class="cv">
        <svg class="scene" width="1562" height="817" viewBox="356 193 1562 817" font-family="'Liberation Serif',serif">
          <defs>
            <linearGradient id="rd" x1="0" x2="1" y1="0" y2="0"><stop offset="0" stop-color="#ff5a5a"/><stop offset="1" stop-color="#d80000"/></linearGradient>
          </defs>
          <path d="M862 477L947 542 982 684 961 1015 958 1010 791 883 812 553Z" fill="#bb8800"/>
          <path d="M947 542L1051 519 1086 662 982 684Z" fill="#c09000"/>
          <path d="M982 684L1086 662 1064 986 961 1010Z" fill="#916f10"/>
          <path d="M862 477L965 454 1051 519 947 542Z" fill="#cc9900"/>
          <path d="M862 477L965 454 1051 519 1086 662 1064 986 961 1010M947 542L1051 519M982 684L1086 662M862 477L947 542 982 684 961 1015M812 553L862 477M812 553L791 883 962 1012" fill="none" stroke="#1d1500" stroke-width="1.200"/>
          <path d="M543 340L916 486" stroke="#2222cc" stroke-width="1.200"/>
          <path d="M912 484l10 3 6 3-14-2z" fill="#1a1ab0"/>
          ${pmi.map(([t, x, y]) => `<text transform="matrix(.93 .37 -.66 .45 ${x} ${y})" font-size="20" font-style="italic" letter-spacing=".4" fill="#2b2bc4" stroke="#2b2bc4" stroke-width=".35">${t}</text>`).join('')}
          <g>
            <path d="M794 806l3 5-3 5-3-5z" fill="none" stroke="#d89a3a" stroke-width="1.200"/>
            <path d="M794 818l3 11h-6z" fill="#e0a040"/>
            <path d="M795 850l12 9v28l-12-4M807 859l21-8v17l-21 8M795 870l33 10" fill="none" stroke="#b07f10" stroke-width=".6" opacity=".7"/>
            <path d="M793 881l26-4-1-3 14 3-13 5v-2l-26 3z" fill="#7a6a40" opacity=".85"/>
            <path d="M792 842L797 855 794.500 854V882L788 884V855L786.500 856Z" fill="url(#rd)"/>
            <path d="M789 885L793 880 807 891 810 888 816 902 802 899 804 896Z" fill="#1fdb2f"/>
            <path d="M820 905l9 1 3 5-9-2z" fill="#d88a20"/>
            <path d="M832 909l5 3v14" fill="none" stroke="#d8a040" stroke-width="1.200"/>
          </g>
          <g>
            <path d="M414 948L436 943 435 940 453 943 437 950 436 947 414 954Z" fill="#0a1ae0"/>
            <path d="M413.500 912L419.500 926 416.500 925V952L410.500 953V925L407.500 926Z" fill="url(#rd)"/>
            <path d="M410 955L414 951 428 962 430 959 437 971 425 970 427 967Z" fill="#18e024"/>
            <text x="409" y="909" font-family="'Liberation Sans',sans-serif" font-size="18" fill="#e02a2a">X</text>
            <text x="456" y="950" font-family="'Liberation Sans',sans-serif" font-size="18" fill="#2233c8">Z</text>
            <text x="436" y="982" font-family="'Liberation Sans',sans-serif" font-size="18" fill="#36d040">Y</text>
          </g>
        </svg>
        <div class="hint">&lt;单击右键&gt;环境相关选项.<br>&lt;Shift +鼠标右键&gt;显示选择过滤器.</div>
        <div class="vbar">
          ${v('exit', 24)}
          ${v('v1', 39.500, 1)}
          ${v('v2', 23.500)}
          ${v('v3', 25)}
          ${v('v4', 37, 1)}
          ${v('v5', 37, 1)}
          ${v('v6', 37, 1)}
          ${v('v7', 37, 1)}
          ${v('v8', 25)}
          ${v('v9', 40, 1)}
          ${v('v10', 35, 1)}
          <span class="v" style="width:25px"><span style="width:16px;height:6px;background:#000"></span></span>
          <span class="v" style="width:25px"><span style="width:16px;height:16px;background:#ffb400;border:1px solid #7a5a10;box-sizing:border-box"></span></span>
          ${v('v11', 32, 1)}
          <span class="layer">${svg('bulb', 16)}${svg('lamp', 14)}<span>图层0000</span><i></i></span>
        </div>
        <div class="scale"><div></div></div>
        <div class="mm">200 mm</div>
      </div>`;
  }
}
customElements.define('zw-viewport', ZwViewport);

class ZwStatusbar extends HTMLElement {
  constructor() {
    super();
    this.attachShadow({ mode: "open" });
    /*html*/
    this.shadowRoot.innerHTML = `
      <style>
        :host{display:flex;align-items:center;height:29px;padding-left:5px;color:#333;box-sizing:border-box;}
        .msg{padding-top:2px;}
        .r{display:flex;align-items:center;margin-left:auto;}
        .sep{width:1px;height:27px;background:#8c9195;margin-right:16px;}
        .on{box-sizing:border-box;width:21px;height:21px;background:#fde9a8;border:1px solid #d8a93c;display:flex;align-items:center;justify-content:center;}
        .box{width:349px;height:22px;background:#fff;border:1px solid #b9c0c5;box-sizing:border-box;margin-left:10px;}
      </style>
      <span class="msg">选择命令或实体</span>
      <div class="r">
        <span class="sep"></span>
        <span class="on">${svg('st1', 17)}</span>
        <span style="margin-left:9px">${svg('st2', 19)}</span>
        <span style="margin-left:10px">${svg('st3', 18)}</span>
        <span class="box"></span>
      </div>`;
  }
}
customElements.define('zw-statusbar', ZwStatusbar);

class ZwToolbox extends HTMLElement {
  constructor() {
    super();
    this.attachShadow({ mode: "open" });
    const items = ['tA', 'tmoon', 'tdots', 'twrench', 'tsmile', 'tshirt', 'tgrid', 'tlock'];
    /*html*/
    this.shadowRoot.innerHTML = `
      <style>
        :host{position:absolute;left:1690px;top:975px;width:228px;height:67px;display:block;}
        .pill{position:absolute;left:28px;right:1px;top:37px;height:28px;box-sizing:border-box;background:rgba(255,255,255,.85);border:1px solid #2b7fd8;border-left:none;border-radius:0 14px 14px 0;display:flex;align-items:center;justify-content:space-between;padding:0 2px 0 31px;}
        .wm{position:absolute;left:-53px;top:38px;font:16px/24px "Liberation Sans",sans-serif;color:rgba(170,175,185,.55);white-space:nowrap;}
        .ava{position:absolute;left:4px;top:16px;width:48px;height:48px;border-radius:50%;box-sizing:border-box;border:2px solid #3a8fe0;background:#fff;overflow:hidden;}
        .tip{position:absolute;left:95px;top:3px;width:131px;height:26px;box-sizing:border-box;background:#fff;border:1px solid #cfe0f2;box-shadow:0 0 2px #7fb0e0;display:flex;align-items:center;justify-content:space-between;padding:0 5px 0 12px;color:#222;line-height:16px;white-space:nowrap;}
        .tip::after{content:"";position:absolute;left:98px;bottom:-5px;width:8px;height:8px;background:#fff;transform:rotate(45deg);}
        .medal{position:absolute;left:57px;top:18px;display:flex;gap:3px;align-items:center;}
      </style>
      <div class="medal">${svg('gem', 15)}${svg('face', 13)}${svg('face', 13)}${svg('face', 13)}</div>
      <div class="pill">${items.map(n => svg(n, 16)).join('')}</div>
      <div class="ava">
        <svg width="44" height="44" viewBox="0 0 44 44">
          <rect width="44" height="44" fill="#fff"/>
          <ellipse cx="12" cy="11" rx="5" ry="6" fill="#f2c9c9" stroke="#b9a79a"/>
          <ellipse cx="34" cy="15" rx="4" ry="5" fill="#f2c9c9" stroke="#b9a79a"/>
          <ellipse cx="22" cy="24" rx="17" ry="16" fill="#f5f5df"/>
          <circle cx="16" cy="20" r="4" fill="#222"/><circle cx="17" cy="19" r="1.500" fill="#fff"/>
          <circle cx="29" cy="22" r="4" fill="#222"/><circle cx="30" cy="21" r="1.500" fill="#fff"/>
          <ellipse cx="22" cy="27" rx="2" ry="1.200" fill="#c98"/>
          <ellipse cx="10" cy="28" rx="3" ry="2" fill="#f4d0d0"/>
          <path d="M6 42l32-4" stroke="#333" stroke-width="2"/>
        </svg>
      </div>
      <span class="wm">https://blog.csdn.net/weixin_43941798</span>
      <div class="tip"><span>工具箱快捷入口</span>${svg('mgrx', 15)}</div>`;
  }
}
customElements.define('zw-toolbox', ZwToolbox);
</script>
</body>
</html>
